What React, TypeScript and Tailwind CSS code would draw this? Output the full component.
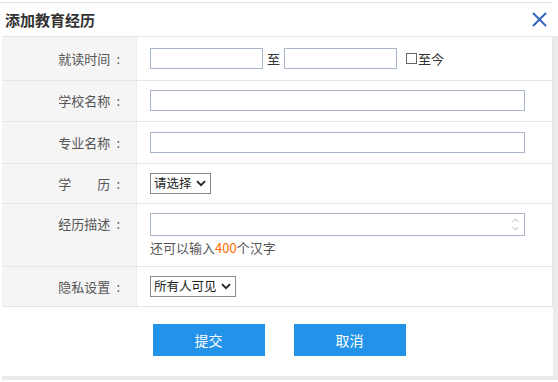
import { ReactNode } from "react"

const font = { fontFamily: '"Noto Sans CJK SC", "Noto Sans", sans-serif' }

function Row({ label, children, h, top = false }: { label: ReactNode; children: ReactNode; h: string; top?: boolean }) {
  return (
    <div className={`flex ${h} ${top ? "" : "border-t border-[#e6e6e6]"}`}>
      <div className="w-[135px] shrink-0 bg-[#f5f5f5] border-r border-[#ececec] flex items-start justify-end pr-[16px] text-[13px] text-[#555]">
        {label}
      </div>
      <div className="flex-1 pl-[13px]">{children}</div>
    </div>
  )
}

function Label({ text, mt }: { text: ReactNode; mt: string }) {
  return (
    <span className={`${mt} flex`}>
      {text}
      <span className="ml-[6px]">:</span>
    </span>
  )
}

function Select({ text, w }: { text: string; w: string }) {
  return (
    <div className={`${w} h-[21px] border border-[#8a8a8a] bg-white flex items-center justify-between whitespace-nowrap pl-[3px] pr-[4px] text-[12.5px] text-[#222]`}>
      <span>{text}</span>
      <svg width="10" height="7" viewBox="0 0 10 7">
        <path d="M1 1.2 L5 5.2 L9 1.2" stroke="#222" strokeWidth="1.8" fill="none" />
      </svg>
    </div>
  )
}

export default function App() {
  return (
    <div className="w-[558px] h-[382px] bg-white relative overflow-hidden" style={font}>
      <div className="absolute left-0 top-[2px] w-[553px] h-[1px] bg-[#e4e4e4]" />
      <div className="absolute right-0 top-[36px] w-[5px] h-[344px] bg-[#ebebeb]" />
      <div className="absolute left-[2px] bottom-[2px] w-[556px] h-[4px] bg-[#ebebeb]" />

      <div className="pt-[3px]">
        <div className="h-[33px] flex items-center justify-between pl-[5px] pr-[10px]">
          <span className="text-[15px] font-bold text-[#333] leading-none">添加教育经历</span>
          <svg width="15" height="15" viewBox="0 0 15 15" className="mr-[1px]">
            <path d="M1 1 L14 14 M14 1 L1 14" stroke="#2d62c0" strokeWidth="1.8" />
          </svg>
        </div>

        <div className="ml-[2px] w-[551px] border-t border-b border-[#e4e4e4] border-r">
          <Row label={<Label text="就读时间" mt="mt-[12px]" />} h="h-[43px]" top>
            <div className="flex items-center mt-[11px] text-[13px] text-[#333]">
              <div className="w-[113px] h-[21px] border border-[#a9b6c8]" />
              <span className="mx-[4px]">至</span>
              <div className="w-[113px] h-[21px] border border-[#a9b6c8]" />
              <div className="w-[11px] h-[11px] border border-[#666] ml-[9px] mr-[1px]" />
              <span>至今</span>
            </div>
          </Row>
          <Row label={<Label text="学校名称" mt="mt-[10px]" />} h="h-[41px]">
            <div className="w-[375px] h-[21px] border border-[#a9b6c8] mt-[9px]" />
          </Row>
          <Row label={<Label text="专业名称" mt="mt-[11px]" />} h="h-[42px]">
            <div className="w-[375px] h-[21px] border border-[#a9b6c8] mt-[10px]" />
          </Row>
          <Row
            label={
              <Label
                text={
                  <>
                    <span>学</span>
                    <span className="ml-[26px]">历</span>
                  </>
                }
                mt="mt-[10px]"
              />
            }
            h="h-[40px]"
          >
            <div className="mt-[9px]">
              <Select text="请选择" w="w-[61px]" />
            </div>
          </Row>
          <Row label={<Label text="经历描述" mt="mt-[10px]" />} h="h-[63px]">
            <div className="mt-[9px] w-[375px] h-[23px] border border-[#a9b6c8] flex justify-end items-center pr-[4px]">
              <svg width="9" height="17" viewBox="0 0 9 17">
                <path d="M1.5 6 L4.5 3 L7.5 6 M1.5 11 L4.5 14 L7.5 11" stroke="#b5b5b5" strokeWidth="1" fill="none" />
              </svg>
            </div>
            <div className="mt-[2px] text-[13px] text-[#555]">
              还可以输入<span className="text-[#ff6a00]">400</span>个汉字
            </div>
          </Row>
          <Row label={<Label text="隐私设置" mt="mt-[10px]" />} h="h-[40px]">
            <div className="mt-[9px]">
              <Select text="所有人可见" w="w-[86px]" />
            </div>
          </Row>
        </div>

        <div className="flex justify-center gap-[29px] mt-[17px]">
          <button className="w-[112px] h-[32px] bg-[#2393e9] text-white text-[14px]">提交</button>
          <button className="w-[112px] h-[32px] bg-[#2393e9] text-white text-[14px]">取消</button>
        </div>
      </div>
    </div>
  )
}
